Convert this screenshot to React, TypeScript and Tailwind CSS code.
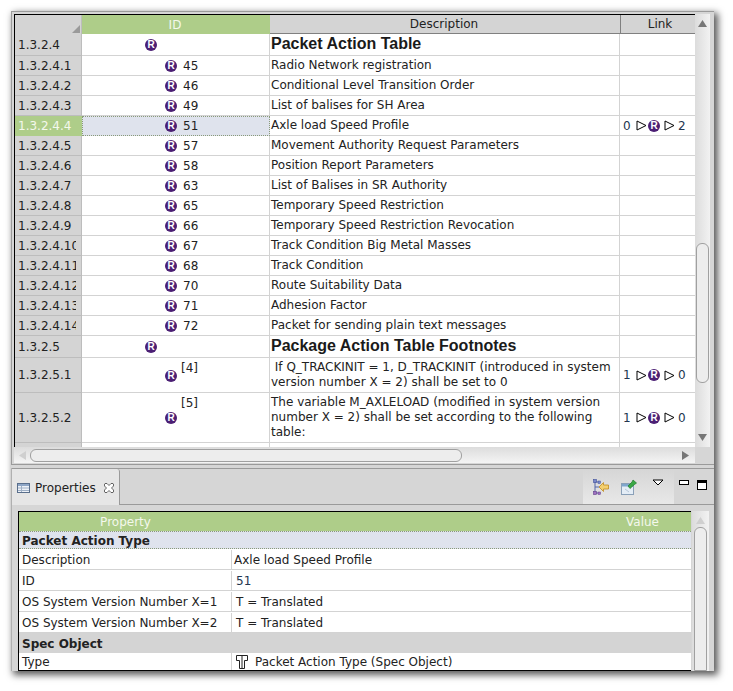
import type { ReactNode } from "react";

const dejavu = "font-['DejaVu_Sans',sans-serif]";

function RIcon() {
  return (
    <span className="flex h-[12px] w-[12px] shrink-0 items-center justify-center rounded-full bg-[#4b1f74] font-['Liberation_Sans',sans-serif] text-[10px] leading-none font-bold text-white">
      R
    </span>
  );
}

function Arrow() {
  return (
    <svg width="11" height="11" viewBox="0 0 11 11" className="shrink-0">
      <polygon points="1,1 10,5.5 1,10" fill="white" stroke="black" strokeWidth="1" />
    </svg>
  );
}

function LinkCell({ from, to }: { from: string; to: string }) {
  return (
    <div className="flex items-center pl-[3px] text-[#23364f]">
      <span className="w-[13px]">{from}</span>
      <Arrow />
      <span className="ml-[1px]">
        <RIcon />
      </span>
      <span className="ml-[4px]">
        <Arrow />
      </span>
      <span className="ml-[3px]">{to}</span>
    </div>
  );
}

function Row({
  num,
  id,
  desc,
  link,
  h = 20,
  selected = false,
}: {
  num: string;
  id: ReactNode;
  desc: ReactNode;
  link?: ReactNode;
  h?: number;
  selected?: boolean;
}) {
  return (
    <div className="flex shrink-0 overflow-hidden" style={{ height: h }}>
      <div
        className={`flex w-[67px] shrink-0 items-center border-r border-b pl-[3px] ${
          selected ? "border-[#aecd89] bg-[#aecd89] text-[#f4f8ec]" : "border-[#bdbdbd] bg-[#d4d4d4]"
        }`}
      >
        <span className="w-[58px] overflow-hidden whitespace-nowrap">{num}</span>
      </div>
      <div
        className={`flex w-[188px] shrink-0 items-center border-r border-b ${
          selected
            ? "border border-dotted border-[#8a9a7a] bg-[#dfe3ed]"
            : "border-[#d3d3d3] bg-white"
        }`}
      >
        {id}
      </div>
      <div className="flex w-[350px] shrink-0 items-center border-r border-b border-[#d3d3d3] bg-white pl-[1px] leading-[15px]">
        {desc}
      </div>
      <div className="flex w-[75px] shrink-0 items-center border-b border-[#d3d3d3] bg-white">{link}</div>
    </div>
  );
}

function ChildId({ n, selected }: { n: string; selected?: boolean }) {
  return (
    <div className={`flex items-center ${selected ? "pl-[82px]" : "pl-[83px]"}`}>
      <RIcon />
      <span className="ml-[6px]">{n}</span>
    </div>
  );
}

function SectionId() {
  return (
    <div className="pl-[63px]">
      <RIcon />
    </div>
  );
}

function Heading({ children }: { children: ReactNode }) {
  return <span className="mb-[2px] font-['Liberation_Sans',sans-serif] text-[16px] font-bold text-[#1a1a1a]">{children}</span>;
}

const children = [
  ["1.3.2.4.1", "45", "Radio Network registration"],
  ["1.3.2.4.2", "46", "Conditional Level Transition Order"],
  ["1.3.2.4.3", "49", "List of balises for SH Area"],
  ["1.3.2.4.4", "51", "Axle load Speed Profile"],
  ["1.3.2.4.5", "57", "Movement Authority Request Parameters"],
  ["1.3.2.4.6", "58", "Position Report Parameters"],
  ["1.3.2.4.7", "63", "List of Balises in SR Authority"],
  ["1.3.2.4.8", "65", "Temporary Speed Restriction"],
  ["1.3.2.4.9", "66", "Temporary Speed Restriction Revocation"],
  ["1.3.2.4.10", "67", "Track Condition Big Metal Masses"],
  ["1.3.2.4.11", "68", "Track Condition"],
  ["1.3.2.4.12", "70", "Route Suitability Data"],
  ["1.3.2.4.13", "71", "Adhesion Factor"],
  ["1.3.2.4.14", "72", "Packet for sending plain text messages"],
];

function PropRow({ name, children: value, inset }: { name: string; children: ReactNode; inset?: boolean }) {
  return (
    <div className="flex h-[21px] shrink-0 border-b border-[#d3d3d3] bg-white pt-[1px]">
      <div className="flex w-[213px] shrink-0 items-center border-r border-[#d3d3d3] pl-[3px]">{name}</div>
      <div className={`flex flex-1 items-center ${inset ? "pl-[4px]" : "pl-[2px]"}`}>{value}</div>
    </div>
  );
}

function ScrollArrow({ dir, color }: { dir: "up" | "down" | "left" | "right"; color: string }) {
  const pts = {
    up: "0,8 4.5,1 9,8",
    down: "0,1 9,1 4.5,8",
    left: "8,0 8,9 1,4.5",
    right: "1,0 1,9 8,4.5",
  }[dir];
  return (
    <svg width="9" height="9" viewBox="0 0 9 9" className="shrink-0">
      <polygon points={pts} fill={color} />
    </svg>
  );
}

function TreeIcon() {
  return (
    <svg width="16" height="16" viewBox="0 0 16 16">
      <path d="M2 3V14M2 8H6M2 14H6M2 3H6" stroke="#5566a8" strokeWidth="1" fill="none" />
      <rect x="0.5" y="0.5" width="3" height="3" fill="#7a88c8" stroke="#3f4f99" strokeWidth="0.6" />
      <rect x="0.5" y="12.5" width="3" height="3" fill="#a070c0" stroke="#5f3f89" strokeWidth="0.6" />
      <rect x="5" y="2" width="2.5" height="2.5" fill="#7a88c8" stroke="#3f4f99" strokeWidth="0.5" />
      <rect x="5" y="13" width="2.5" height="2.5" fill="#a070c0" stroke="#5f3f89" strokeWidth="0.5" />
      <polygon points="6,8 10.5,3.5 10.5,6 15.5,6 15.5,10 10.5,10 10.5,12.5" fill="#f3cf70" stroke="#c08a20" strokeWidth="0.8" />
    </svg>
  );
}

function PinWindowIcon() {
  return (
    <svg width="16" height="16" viewBox="0 0 16 16">
      <rect x="0.5" y="4.5" width="12" height="11" fill="#e4edf6" stroke="#8aa0b8" strokeWidth="1" />
      <rect x="1" y="5" width="11" height="2.5" fill="#7fa6cc" />
      <path d="M4 10L8 13" stroke="#b6c6d8" strokeWidth="1" />
      <path d="M7 7L11 3L12 1L15.5 4L13.5 5.5L9 9.5Z" fill="#39a845" stroke="#1f7a2c" strokeWidth="0.7" />
    </svg>
  );
}

function PropsTabIcon() {
  return (
    <svg width="13" height="12" viewBox="0 0 13 12">
      <rect x="0.5" y="1.5" width="12" height="9" fill="#eef2f8" stroke="#5a6f8c" />
      <rect x="1" y="2" width="11" height="2" fill="#8ea6c6" />
      <path d="M1 6H12M1 8.5H12M4.5 4V10" stroke="#9fb0c6" strokeWidth="1" />
    </svg>
  );
}

function CloseIcon() {
  return (
    <svg width="10" height="10" viewBox="0 0 10 10">
      <path
        d="M0.5 1L1 0.5H3L5 2.5L7 0.5H9L9.5 1V3L7.5 5L9.5 7V9L9 9.5H7L5 7.5L3 9.5H1L0.5 9V7L2.5 5L0.5 3Z"
        fill="white"
        stroke="#444"
        strokeWidth="0.8"
      />
    </svg>
  );
}

function TypeIcon() {
  return (
    <svg width="12" height="14" viewBox="0 0 12 14" className="shrink-0">
      <path d="M0.5 0.5H11.5V5.5H8.5V13.5H3.5V5.5H0.5Z" fill="white" stroke="#222" strokeWidth="1" />
      <path d="M6 1V13" stroke="#222" strokeWidth="1" />
    </svg>
  );
}

export default function App() {
  return (
    <div className={`h-[691px] w-[733px] overflow-hidden bg-white pt-[11px] pl-[11px] text-[12px] text-[#222] ${dejavu}`}>
      <div className="flex h-[660px] w-[703px] flex-col bg-[#d6d6d6] shadow-[3px_3px_7px_1px_rgba(0,0,0,0.65)]">
        {/* editor pane */}
        <div className="flex h-[453px] shrink-0 border-t border-l border-[#9a9a9a] pt-[2px] pl-[2px]">
          <div className="flex w-[696px] flex-col">
            <div className="flex h-[433px] shrink-0">
              <div className="flex w-[681px] shrink-0 flex-col overflow-hidden border-t border-l border-black">
                <div className="flex h-[19px] shrink-0">
                  <div className="relative w-[67px] shrink-0 border-r border-[#bdbdbd] bg-[#d4d4d4]">
                    <svg width="8" height="8" viewBox="0 0 8 8" className="absolute right-[1px] bottom-[1px]">
                      <polygon points="8,0 8,8 0,8" fill="#9a9a9a" />
                    </svg>
                  </div>
                  <div className="flex w-[188px] shrink-0 items-center justify-center bg-[#aecd89] pr-[2px] text-[#f4f8ec]">ID</div>
                  <div className="flex w-[350px] shrink-0 items-center justify-center border-b border-[#808080] bg-[#d4d4d4] pr-[2px]">
                    Description
                  </div>
                  <div className="flex w-[75px] shrink-0 items-center justify-center border-b border-l border-[#808080] bg-[#d4d4d4] pl-[4px]">
                    Link
                  </div>
                </div>
                <Row num="1.3.2.4" id={<SectionId />} desc={<Heading>Packet Action Table</Heading>} h={22} />
                {children.map(([num, id, desc]) => {
                  const selected = num === "1.3.2.4.4";
                  return (
                    <Row
                      key={num}
                      num={num}
                      id={<ChildId n={id} selected={selected} />}
                      desc={desc}
                      selected={selected}
                      link={selected ? <LinkCell from="0" to="2" /> : undefined}
                    />
                  );
                })}
                <Row num="1.3.2.5" id={<SectionId />} desc={<Heading>Package Action Table Footnotes</Heading>} h={22} />
                <Row
                  num="1.3.2.5.1"
                  h={35}
                  id={
                    <div className="flex h-full pl-[83px]">
                      <span className="mt-[12px]">
                        <RIcon />
                      </span>
                      <span className="ml-[4px] pt-[1px]">[4]</span>
                    </div>
                  }
                  desc={
                    <span>
                      &nbsp;If Q_TRACKINIT = 1, D_TRACKINIT (introduced in system
                      <br />
                      version number X = 2) shall be set to 0
                    </span>
                  }
                  link={<LinkCell from="1" to="0" />}
                />
                <Row
                  num="1.3.2.5.2"
                  h={50}
                  id={
                    <div className="flex h-full pl-[83px]">
                      <span className="mt-[19px]">
                        <RIcon />
                      </span>
                      <span className="ml-[4px] pt-[1px]">[5]</span>
                    </div>
                  }
                  desc={
                    <span>
                      The variable M_AXLELOAD (modified in system version
                      <br />
                      number X = 2) shall be set according to the following
                      <br />
                      table:
                    </span>
                  }
                  link={<LinkCell from="1" to="0" />}
                />
                <Row num="" h={30} id={null} desc={null} />
              </div>
              <div className="flex w-[15px] shrink-0 flex-col items-center justify-between bg-gradient-to-r from-[#dcdcdc] to-[#f2f2f2] py-[5px]">
                <ScrollArrow dir="up" color="#777" />
                <div className="h-[140px] w-[13px] translate-y-[82px] rounded-t-[6px] rounded-b-[6px] border border-[#a0a0a0] bg-[#ededed]" />
                <ScrollArrow dir="down" color="#777" />
              </div>
            </div>
            <div className="flex h-[16px] w-[681px] shrink-0 items-center bg-gradient-to-b from-[#dcdcdc] to-[#f4f4f4] pr-[5px] pl-[4px]">
              <ScrollArrow dir="left" color="#cfcfcf" />
              <div className="ml-[3px] h-[13px] w-[432px] rounded-[6px] border border-[#a0a0a0] bg-[#ededed]" />
              <div className="flex-1" />
              <ScrollArrow dir="right" color="#777" />
            </div>
          </div>
        </div>

        <div className="h-[4px] shrink-0 border-t border-[#9a9a9a]" />

        {/* properties pane */}
        <div className="flex min-h-0 flex-1 flex-col border-l border-[#b0b0b0]">
          <div className="flex h-[37px] shrink-0 items-stretch border-t border-[#9a9a9a]">
            <div className="flex w-[108px] shrink-0 items-center rounded-tr-[3px] border-r border-[#9a9a9a] bg-[#e6e6e6] pt-[1px] pl-[5px]">
              <PropsTabIcon />
              <span className="ml-[5px]">Properties</span>
              <span className="ml-[8px]">
                <CloseIcon />
              </span>
            </div>
            <div className="flex-1 border-b border-[#9a9a9a]" />
            <div className="flex w-[91px] shrink-0 items-start gap-[12px] border-b border-[#9a9a9a] bg-gradient-to-b from-[#d6d6d6] to-[#e8e8e8] pt-[10px] pl-[10px]">
              <TreeIcon />
              <PinWindowIcon />
              <svg width="12" height="8" viewBox="0 0 12 8" className="ml-[3px]">
                <polygon points="1,1 11,1 6,6" fill="white" stroke="black" />
              </svg>
            </div>
            <div className="flex w-[40px] shrink-0 items-start gap-[8px] border-b border-[#9a9a9a] pt-[11px] pl-[5px]">
              <div className="h-[5px] w-[10px] border border-black bg-white" />
              <div className="h-[10px] w-[10px] border border-black border-t-[3px] bg-white" />
            </div>
          </div>

          <div className="flex min-h-0 flex-1 pt-[6px] pl-[6px]">
            <div className="flex w-[673px] shrink-0 flex-col overflow-hidden border-t border-b border-l border-black">
              <div className="flex h-[19px] shrink-0 bg-[#aecd89] text-[#f4f8ec]">
                <div className="flex w-[213px] items-center justify-center">Property</div>
                <div className="flex flex-1 items-center pl-[394px]">Value</div>
              </div>
              <div className="flex h-[18px] shrink-0 items-center border-y border-dotted border-[#8a9a7a] bg-[#dfe3ed] pt-[1px] pl-[3px] font-bold">
                Packet Action Type
              </div>
              <PropRow name="Description">Axle load Speed Profile</PropRow>
              <PropRow name="ID" inset>
                <span className="text-[#23364f]">51</span>
              </PropRow>
              <PropRow name="OS System Version Number X=1" inset>
                T = Translated
              </PropRow>
              <PropRow name="OS System Version Number X=2" inset>
                T = Translated
              </PropRow>
              <div className="flex h-[20px] shrink-0 items-center bg-[#d4d4d4] pt-[1px] pl-[3px] font-bold">Spec Object</div>
              <div className="flex min-h-0 flex-1 bg-white">
                <div className="flex w-[213px] shrink-0 items-center border-r border-[#d3d3d3] pl-[3px]">Type</div>
                <div className="flex flex-1 items-center pl-[4px]">
                  <TypeIcon />
                  <span className="ml-[7px]">Packet Action Type (Spec Object)</span>
                </div>
              </div>
            </div>
            <div className="ml-[1px] flex w-[17px] shrink-0 flex-col items-center bg-gradient-to-r from-[#dcdcdc] to-[#f2f2f2] pt-[5px]">
              <ScrollArrow dir="up" color="#cfcfcf" />
              <div className="mt-[2px] w-[13px] flex-1 rounded-t-[6px] border border-[#a0a0a0] bg-[#ededed]" />
            </div>
          </div>
        </div>
      </div>
    </div>
  );
}
